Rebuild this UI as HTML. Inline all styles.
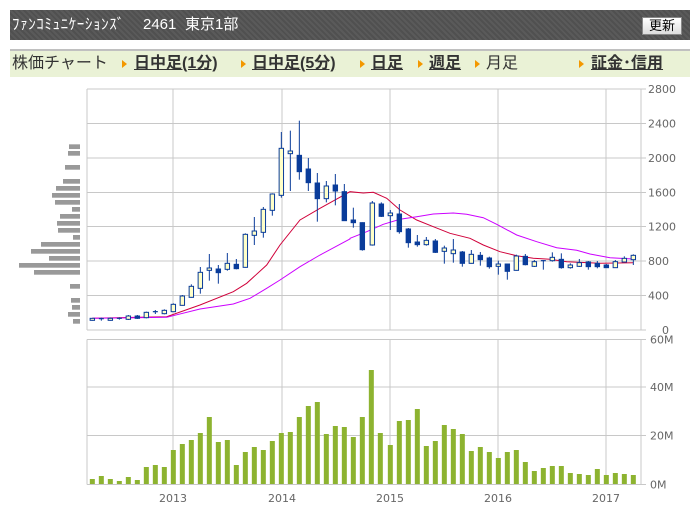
<!DOCTYPE html>
<html><head><meta charset="utf-8"><style>
body{margin:0;width:698px;height:522px;background:#fff;position:relative;overflow:hidden;font-family:"Liberation Sans","Noto Sans CJK JP",sans-serif}
#hd{position:absolute;left:10px;top:10px;width:680px;height:30px;background:#555 repeating-linear-gradient(45deg,#5a5a5a 0 2px,#505050 2px 4px);color:#fff;font-size:15px;line-height:30px}
#hd span{position:absolute;top:0;white-space:nowrap}
#btn{position:absolute;left:642px;top:17px;width:38px;height:16px;background:linear-gradient(#fff,#ddd);border:1px solid #888;font-size:13px;line-height:16px;text-align:center;color:#000}
#nav{position:absolute;left:10px;top:49px;width:680px;height:26px;background:#eaf2d6;border-top:2px solid #c0c0c0;font-size:16px;color:#333;line-height:26px}
#nav a{position:absolute;top:0;color:#333;font-weight:bold;text-decoration:underline;white-space:nowrap}
#nav i{position:absolute;top:9px;width:0;height:0;border-left:5px solid #f39800;border-top:4px solid transparent;border-bottom:4px solid transparent}
#nav b{position:absolute;top:0;font-weight:normal;white-space:nowrap}
svg{position:absolute;left:0;top:0}
</style></head><body>
<div id="hd"><span style="left:2px;letter-spacing:0.6px">ﾌｧﾝｺﾐｭﾆｹｰｼｮﾝｽﾞ</span><span style="left:133px">2461</span><span style="left:175px">東京1部</span></div>
<div id="btn">更新</div>
<div id="nav">
<b style="left:2px">株価チャート</b>
<i style="left:112px"></i><a style="left:124px">日中足(1分)</a>
<i style="left:231px"></i><a style="left:242px">日中足(5分)</a>
<i style="left:350px"></i><a style="left:361px">日足</a>
<i style="left:408px"></i><a style="left:419px">週足</a>
<i style="left:465px"></i><b style="left:476px">月足</b>
<i style="left:569px"></i><a style="left:581px">証金･信用</a>
</div>
<svg id="s" width="698" height="522" xmlns="http://www.w3.org/2000/svg"></svg>
<script>
var s=document.getElementById('s'),h='';
function L(x1,y1,x2,y2,c,w){h+='<line x1="'+x1+'" y1="'+y1+'" x2="'+x2+'" y2="'+y2+'" stroke="'+c+'" stroke-width="'+(w||1)+'"/>';}
function R(x,y,w,hh,f,st){h+='<rect x="'+x+'" y="'+y+'" width="'+w+'" height="'+hh+'" fill="'+f+'"'+(st?' stroke="'+st+'" stroke-width="1"':'')+'/>';}
function T(x,y,t,a){h+='<text x="'+x+'" y="'+y+'" font-size="11" fill="#666" font-family="DejaVu Sans,sans-serif" text-anchor="'+(a||'start')+'">'+t+'</text>';}
var G='#c8c8c8';
[89,123.5,158,192.5,226.5,261,295.5].forEach(function(y,i){L(87,y,641,y,G);L(641,y,646,y,G);T(648,y+4,(2800-400*i)+'');});
L(87,330,646,330,G);T(662,334,'0');
[87,173,282,390,498,606,641].forEach(function(x){L(x,89,x,330,G);L(x,339.5,x,484.5,G);});
[339.5,387,435.5,484.5].forEach(function(y,i){L(87,y,646,y,G);T(650,y+4,['60M','40M','20M','0M'][i]);});
[[173,'2013'],[282,'2014'],[390,'2015'],[498,'2016'],[606,'2017']].forEach(function(a){T(a[0],502,a[1],'middle');});
var vp=[[178,207],[198,204],[240,195],[282,189],[303,168],[324,156],[345,165],[366,216],[387,180],[408,171],[429,174],[450,219],[471,123],[492,93],[513,147],[534,57],[555,102],[597,210],[639,213],[660,216],[681,204],[702,219]];
vp.forEach(function(v){R(v[1]/3,85+v[0]/3,80-v[1]/3,4.7,'#999');});
var v1=[432,423,432,438,426,435,396,390,396,345,327,315,294,246,321,315,390,351,336,345,318,294,291,246,213,201,297,273,276,306,246,105,294];
var v2=[330,258,255,222,333,318,270,282,297,348,336,351,369,351,345,381,408,399,393,393,414,417,420,402,420,414,417,420];
var vb=[];v1.forEach(function(y,i){vb.push([80+(37+27*i)/3,335+y/3]);});v2.forEach(function(y,i){vb.push([385+(16+27*i)/3,335+y/3]);});
vb.forEach(function(b){R(b[0]-2.5,b[1],5,484-b[1],'#8db330');});
function P(pts,c){h+='<polyline fill="none" stroke="'+c+'" stroke-width="1" points="'+pts.map(function(p){return p[0].toFixed(1)+','+p[1].toFixed(1)}).join(' ')+'"/>';}
var z2=function(a){return a.map(function(p){return[p[0]/3,85+p[1]/3]})},z3=function(a){return a.map(function(p){return[350+p[0]/3,85+p[1]/3]})};
P(z2([[277,700],[500,695],[600,660],[700,620],[740,595],[800,540],[840,480],[900,405],[960,370],[1050,320]]).concat(z3([[0,320],[40,324],[70,322],[110,340],[150,375],[200,405],[250,425],[300,445],[360,460],[400,480],[450,500],[500,512],[550,520],[600,523],[650,530],[750,535],[800,534],[850,533]])),'#d0003a');
P(z2([[277,700],[500,697],[600,672],[700,657],[750,640],[800,610],[840,585],[900,545],[960,510],[1050,462]]).concat(z3([[0,460],[50,440],[100,418],[150,403],[200,395],[250,387],[310,384],[350,388],[400,398],[440,418],[500,450],[560,470],[620,488],[680,496],[720,507],[780,518],[850,522]])),'#cc00ff');
var c2=[[277,700,706,699,707,0],[304,701,704,698,707,0],[331,700,706,698,707,0],[358,700,701,697,704,0],[385,693,703,690,705,0],[412,693,700,690,702,1],[439,682,698,680,700,0],[466,680,681,675,687,0],[493,676,686,673,688,0],[520,658,680,655,681,0],[547,633,661,630,662,0],[574,604,637,598,638,0],[601,562,610,546,626,0],[628,549,556,507,587,0],[655,552,563,540,596,1],[682,535,553,504,557,0],[709,538,551,522,553,1],[736,448,547,445,548,0],[763,438,451,396,480,0],[790,373,442,366,458,0],[817,327,376,325,392,0],[844,190,331,141,338,0],[871,198,206,137,318,0],[898,211,260,107,284,1],[925,252,293,219,318,1],[952,294,341,264,410,1],[979,303,341,288,352,0],[1006,300,318,267,361,1],[1033,320,407,297,407,1]];
var c3=[[10,405,413,368,428,1],[37,413,494,412,497,1],[67,354,480,348,482,0],[94,357,394,352,396,1],[121,384,392,375,435,0],[148,387,440,357,446,1],[175,432,473,429,488,1],[202,471,479,450,485,1],[229,466,479,456,482,0],[256,468,502,462,504,1],[283,489,499,482,536,0],[310,495,506,462,533,0],[337,501,535,498,545,1],[364,508,535,495,536,0],[391,511,524,501,542,1],[418,519,545,515,551,1],[445,537,544,527,569,0],[472,537,559,536,584,1],[499,513,556,509,557,0],[526,514,539,507,541,1],[553,530,544,525,546,0],[580,527,529,525,554,0],[607,517,527,502,530,0],[634,523,548,505,551,1],[661,540,548,535,551,0],[688,533,544,522,546,0],[715,531,545,528,554,1],[742,535,545,528,550,1],[769,540,548,537,549,1],[796,530,548,525,549,0],[823,520,531,514,532,0],[850,511,524,508,540,0]];
function C(x,a,b,wa,wb,f){L(x,wa,x,wb,'#0a3c9a');if(b-a<1.2){L(x-2.5,a,x+2.5,a,'#0a3c9a',1.2);return;}R(x-2.2,a,4.4,b-a,f?'#0a3c9a':'#ffffc8','#0a3c9a');}
c2.forEach(function(c){C(c[0]/3,85+c[1]/3,85+c[2]/3,85+c[3]/3,85+c[4]/3,c[5]);});
c3.forEach(function(c){C(350+c[0]/3,85+c[1]/3,85+c[2]/3,85+c[3]/3,85+c[4]/3,c[5]);});
s.innerHTML=h;
</script>
</body></html>
